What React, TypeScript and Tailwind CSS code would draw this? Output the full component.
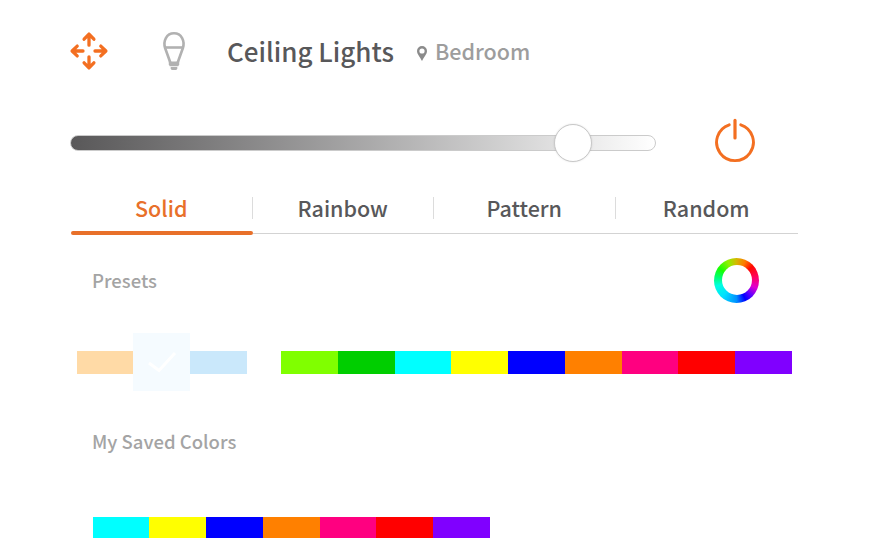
import React from "react";

const FONT = "font-['Noto_Sans_CJK_SC','Noto_Sans',sans-serif]";

function MoveIcon() {
  return (
    <svg width="40" height="40" viewBox="0 0 40 40" fill="none" stroke="#f36f21" strokeWidth="3.3" strokeLinecap="round" strokeLinejoin="round">
      <path d="M20 14.2V3.5M15.1 8.2L20 3.1L24.9 8.2" />
      <path d="M20 25.8V36.5M15.1 31.8L20 36.9L24.9 31.8" />
      <path d="M14 20H3.5M8.2 15.1L3.1 20L8.2 24.9" />
      <path d="M26 20H36.5M31.8 15.1L36.9 20L31.8 24.9" />
    </svg>
  );
}

function BulbIcon() {
  return (
    <svg width="24" height="40" viewBox="0 0 24 40" fill="none" stroke="#b1b1b1" strokeWidth="2.6">
      <path d="M8.3 31.5L3.1 17C1 10.2 4.3 2.3 12 2.3S23 10.2 20.9 17L15.7 31.5" />
      <path d="M2.7 16.5H21.3" />
      <path d="M6.8 30.4H17.2V33.2L16.3 35.2H7.7L6.8 33.2Z" fill="#b1b1b1" stroke="none" />
      <path d="M8.7 36.1H15.3V37.4L14.4 39H9.6L8.7 37.4Z" fill="#b1b1b1" stroke="none" />
    </svg>
  );
}

function PinIcon() {
  return (
    <svg width="10" height="15" viewBox="0 0 10 15">
      <path fillRule="evenodd" fill="#8b8b8b" d="M5 0A5 5 0 0 0 0 5C0 8.2 3.2 11.3 5 15C6.8 11.3 10 8.2 10 5A5 5 0 0 0 5 0ZM5 2.4A2.6 2.6 0 1 1 5 7.6A2.6 2.6 0 1 1 5 2.4Z" />
    </svg>
  );
}

function PowerIcon() {
  return (
    <svg width="42" height="46" viewBox="0 0 42 46" fill="none" stroke="#f36f21" strokeWidth="2.9" strokeLinecap="round">
      <path d="M15.2 6.8A18.4 18.4 0 1 0 26.8 6.8" />
      <path d="M21 2.4V20" strokeWidth="3.2" />
    </svg>
  );
}

function Swatches({ colors, height }: { colors: string[]; height: string }) {
  return (
    <>
      {colors.map((color, i) => (
        <div key={i} className={`w-[56.75px] shrink-0 ${height}`} style={{ backgroundColor: color }} />
      ))}
    </>
  );
}

const tabs = ["Solid", "Rainbow", "Pattern", "Random"];
const bright = ["#80ff00", "#00ce00", "#00ffff", "#ffff00", "#0000ff", "#ff8000", "#ff0080", "#ff0000", "#8000ff"];
const saved = ["#00ffff", "#ffff00", "#0000ff", "#ff8000", "#ff0080", "#ff0000", "#8000ff"];

export default function App() {
  return (
    <main className={`h-[538px] w-[869px] overflow-hidden bg-white text-[#58585a] ${FONT}`}>
      <header className="flex h-[102px] items-center pl-[69px] whitespace-nowrap">
        <MoveIcon />
        <div className="ml-[53px] flex"><BulbIcon /></div>
        <h1 className="ml-[41px] w-[190px] text-[26px] leading-[40px] font-medium">
          <span className="inline-block origin-left">Ceiling Lights</span>
        </h1>
        <div className="mt-[3px] flex pt-px"><PinIcon /></div>
        <span className="ml-[8px] text-[21.5px] leading-[40px] font-medium text-[#9d9d9d]">Bedroom</span>
      </header>

      <section className="flex h-[82px] items-center pl-[70px]">
        <div className="relative h-4 w-[586px] rounded-full border border-[#cbcbcb] bg-linear-to-r from-[#595859] to-white">
          <div className="absolute top-[-12px] left-[483px] size-[38px] rounded-full border border-[#c8c8c8] bg-white shadow-[0_0_2px_rgba(0,0,0,0.12)]" />
        </div>
        <div className="-mt-[5px] ml-[58px]"><PowerIcon /></div>
      </section>

      <nav className="relative ml-[71px] flex h-[51px] w-[727px] flex-col">
        <div className="flex h-[48px] items-center">
          {tabs.map((tab, i) => (
            <div key={tab} className={`flex h-[22px] w-[181.5px] items-center justify-center border-[#dcdcdc] ${i < 3 ? "border-r-[1.5px]" : ""}`}>
              <span className={`text-[21.5px] leading-[24px] font-medium ${i === 0 ? "text-[#e8702a]" : ""}`}>{tab}</span>
            </div>
          ))}
        </div>
        <div className="flex h-[4px] items-center">
          <div className="h-[4px] w-[182px] rounded-full bg-[#e8702a]" />
          <div className="h-px flex-1 bg-[#d3d3d3]" />
        </div>
      </nav>

      <section className="flex h-[90px] items-center justify-between pr-[110px] pl-[92px]">
        <h2 className="text-[18.5px] leading-[28px] font-medium text-[#a4a4a4]">Presets</h2>
        <div className="flex size-[45px] items-center justify-center rounded-full bg-[conic-gradient(#d4b800_0deg,#ff7800_25deg,#ff0800_48deg,#ff0060_80deg,#e000d0_110deg,#6000ff_135deg,#0000ff_155deg,#0090ff_180deg,#00e0ff_220deg,#00ffe0_255deg,#00ff70_280deg,#18ff00_305deg,#90f000_335deg,#d4b800_360deg)]">
          <div className="size-[30px] rounded-full bg-white" />
        </div>
      </section>

      <section className="flex h-[74px] items-center pl-[76.5px]">
        <div className="h-[23px] w-[56.5px] bg-[#ffdaa6]" />
        <div className="flex h-[58px] w-[57px] items-center justify-center bg-[#f5fbff]">
          <svg width="30" height="22" viewBox="0 0 30 22" fill="none" stroke="white" strokeWidth="3">
            <path d="M2 12L12 19.5L28 2" />
          </svg>
        </div>
        <div className="h-[23px] w-[56.5px] bg-[#cae8fb]" />
        <div className="ml-[34.5px] flex">
          <Swatches colors={bright} height="h-[23px]" />
        </div>
      </section>

      <h2 className="flex h-[83px] items-center pl-[92px] text-[18.5px] leading-[28px] font-medium text-[#a4a4a4]">My Saved Colors</h2>

      <section className="mt-[35px] flex pl-[92.7px]">
        <Swatches colors={saved} height="h-[21px]" />
      </section>
    </main>
  );
}
